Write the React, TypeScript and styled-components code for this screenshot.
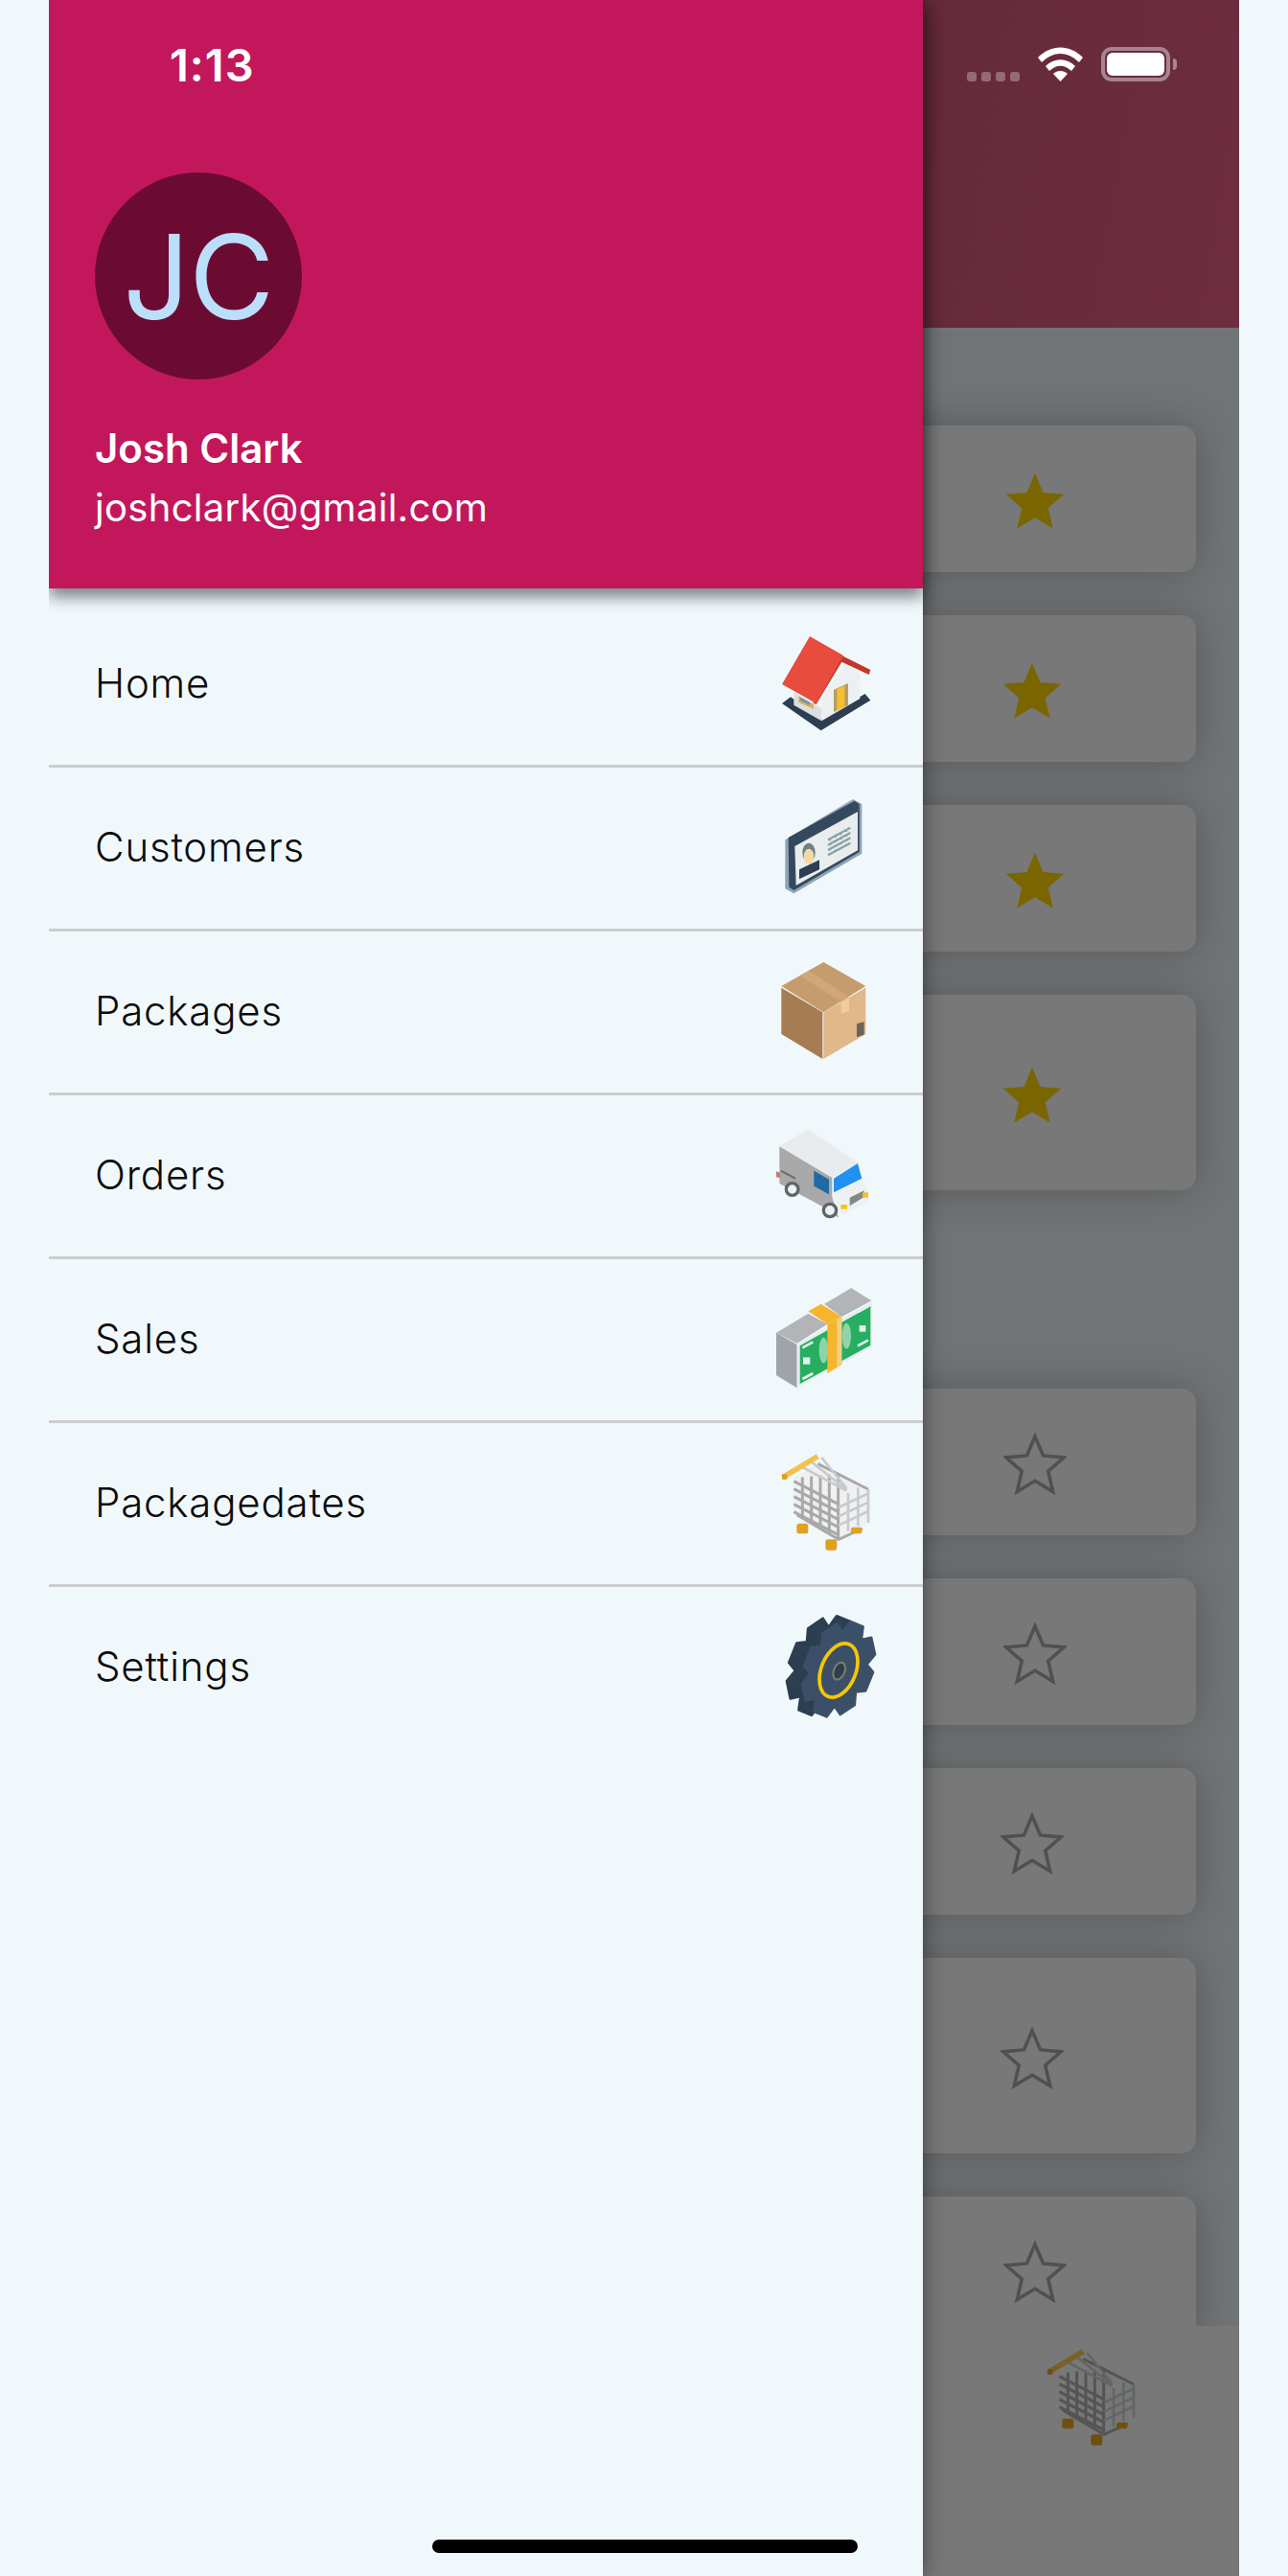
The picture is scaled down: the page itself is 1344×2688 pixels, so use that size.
import React from 'react';
import styled, { createGlobalStyle } from 'styled-components';

const GlobalStyle = createGlobalStyle`
  html, body { margin: 0; padding: 0; background: #f0f8fc; }
  body { font-family: Inter, "Noto Sans", sans-serif; }
`;

const Phone = styled.div`
  position: relative;
  display: flex;
  width: 1242px;
  height: 2688px;
  margin-left: 51px;
  overflow: hidden;
`;

const Drawer = styled.aside`
  position: relative;
  z-index: 2;
  flex: 0 0 912px;
  display: flex;
  flex-direction: column;
  background: #f0f8fc;
  box-shadow: 0 0 22px rgba(0, 0, 0, 0.45);
`;

const DrawerHeader = styled.header`
  box-sizing: border-box;
  height: 614px;
  padding: 47px 0 0 48px;
  background: #c2185b;
  color: #fff;
  box-shadow: 0 9px 15px rgba(0, 0, 0, 0.48);
`;

const Time = styled.div`
  margin-left: 78px;
  font-size: 47px;
  line-height: 42px;
  font-weight: 600;
  letter-spacing: 1px;
`;

const Avatar = styled.div`
  display: flex;
  align-items: center;
  justify-content: center;
  width: 216px;
  height: 216px;
  margin-top: 91px;
  border-radius: 50%;
  background: #6b0b32;
  color: #bbdefb;
  font-size: 122px;
  font-weight: 400;
  letter-spacing: -1px;
`;

const UserName = styled.div`
  margin-top: 47px;
  font-size: 42px;
  line-height: 50px;
  font-weight: 600;
`;

const UserMail = styled.div`
  margin-top: 12px;
  font-size: 40px;
  line-height: 50px;
  font-weight: 400;
  letter-spacing: 0.3px;
`;

const Menu = styled.nav`
  padding-top: 16px;
`;

const MenuRow = styled.div`
  box-sizing: border-box;
  display: flex;
  align-items: center;
  justify-content: space-between;
  height: 171px;
  padding: 0 41px 3px 48px;
  border-bottom: 3px solid #cccccc;
  &:last-child {
    border-bottom-color: transparent;
  }
`;

const MenuLabel = styled.span`
  font-size: 42px;
  font-weight: 300;
  letter-spacing: 0.8px;
  color: #0c0c0c;
`;

const IconSvg = styled.svg`
  display: block;
  width: 120px;
  height: 120px;
  flex: none;
  filter: blur(0.7px);
`;

const Behind = styled.main`
  position: relative;
  flex: 1;
  display: flex;
  flex-direction: column;
  min-width: 0;
`;

const Scrim = styled.div`
  position: absolute;
  inset: 0;
  z-index: 1;
  background: rgba(0, 0, 0, 0.5);
`;

const AppBar = styled.div`
  flex: 0 0 342px;
  background: linear-gradient(100deg, #ca5474, #dc5a80);
`;

const CardList = styled.div`
  flex: 1;
  min-height: 0;
  overflow: hidden;
  padding-top: 102px;
  background: #e2e8ec;
`;

const CardGroup = styled.div`
  display: flex;
  flex-direction: column;
  gap: 45px;
  & + & {
    margin-top: 207px;
  }
`;

const Card = styled.div<{ $tall?: boolean }>`
  box-sizing: border-box;
  display: flex;
  align-items: center;
  flex: none;
  height: ${p => (p.$tall ? 204 : 153)}px;
  width: 325px;
  margin-left: -40px;
  border-radius: 15px;
  background: #f0f0f0;
  box-shadow: 0 0 40px rgba(0, 0, 0, 0.24);
`;

const StarSvg = styled.svg<{ $nudge: number }>`
  display: block;
  width: 66px;
  height: 66px;
  margin-left: ${p => 124 + p.$nudge}px;
  margin-top: 5px;
`;

const BottomBar = styled.div`
  flex: 0 0 261px;
  box-sizing: border-box;
  position: relative;
  padding: 15px 0 0 116px;
  background: #f0f0f0;
`;

const StatusIcons = styled.div`
  position: absolute;
  z-index: 3;
  top: 49px;
  right: 72px;
  display: flex;
  align-items: flex-end;
  gap: 19px;
  height: 36px;
`;

const SignalDots = styled.div`
  display: flex;
  gap: 5px;
`;

const SignalDot = styled.i`
  width: 10px;
  height: 10px;
  border-radius: 3px;
  background: rgba(255, 255, 255, 0.3);
`;

const Battery = styled.div`
  position: relative;
  box-sizing: border-box;
  width: 72px;
  height: 36px;
  padding: 2px;
  border: 4px solid rgba(255, 255, 255, 0.42);
  border-radius: 11px;
  &::before {
    content: '';
    display: block;
    width: 100%;
    height: 100%;
    border-radius: 6px;
    background: #fff;
  }
  &::after {
    content: '';
    position: absolute;
    top: 8px;
    right: -11px;
    width: 4px;
    height: 12px;
    border-radius: 0 6px 6px 0;
    background: rgba(255, 255, 255, 0.42);
  }
`;

const HomeBar = styled.div`
  position: absolute;
  z-index: 4;
  left: 400px;
  bottom: 24px;
  width: 444px;
  height: 14px;
  border-radius: 7px;
  background: #000;
`;

const STAR_POINTS = '12,1.4 15.1,8.7 23,9.4 17,14.6 18.8,22.4 12,18.3 5.2,22.4 7,14.6 1,9.4 8.9,8.7';

const Star = ({ filled, nudge }: { filled?: boolean; nudge: number }) => (
  <StarSvg viewBox="0 0 24 24" $nudge={nudge}>
    {filled ? (
      <polygon points={STAR_POINTS} fill="#f4cc00" />
    ) : (
      <polygon points={STAR_POINTS} fill="none" stroke="#a0a0a0" strokeWidth="1.3" strokeLinejoin="miter" />
    )}
  </StarSvg>
);

const HomeIcon = () => (
  <IconSvg viewBox="66 42 360 360">
    <polygon points="108,285 135,265 230,335 368,255 385,275 230,370" fill="#2c3e50" />
    <polygon points="145,250 232,300 232,340 145,290" fill="#dcdfe0" />
    <polygon points="232,270 305,160 352,190 352,270 232,340" fill="#ecf0f1" />
    <polygon points="160,262 207,288 207,302 160,282" fill="#d9ae5a" />
    <polygon points="165,266 195,282 195,290 165,276" fill="#6f93b5" />
    <polygon points="270,242 315,222 315,290 270,312" fill="#b89d62" />
    <polygon points="280,240 304,230 304,296 280,308" fill="#f6bf2f" />
    <polygon points="295,135 385,180 380,195 295,155 215,288 205,283" fill="#c0392b" />
    <polygon points="195,75 300,135 215,285 108,225" fill="#e74c3c" />
  </IconSvg>
);

const CustomerIcon = () => (
  <IconSvg viewBox="66 555 360 360">
    <polygon points="118,712 330,585 358,600 358,755 145,880 118,865" fill="#8fa3b5" strokeLinejoin="round" />
    <polygon points="128,705 335,590 350,600 350,750 145,870 130,860" fill="#34495e" />
    <polygon points="148,732 345,624 345,745 152,855" fill="#e9edee" />
    <ellipse cx="192" cy="752" rx="20" ry="30" fill="#6e7f8c" />
    <ellipse cx="192" cy="764" rx="16" ry="24" fill="#f4d9a4" />
    <polygon points="162,805 225,775 225,805 162,835" fill="#2c3e50" />
    <g stroke="#88a3a5" strokeWidth="7" fill="none">
      <path d="M252 712 L322 674 M252 728 L322 690 M252 744 L322 706 M252 760 L322 722" />
      <path d="M258 708 V758 M275 698 V748 M292 690 V740 M309 680 V730" strokeDasharray="7 8" />
    </g>
  </IconSvg>
);

const PackageIcon = () => (
  <IconSvg viewBox="36 48 360 360">
    <polygon points="76,150 208,75 340,150 208,232" fill="#c59c6d" />
    <polygon points="76,155 205,232 205,378 76,300" fill="#a67c52" />
    <polygon points="208,232 340,155 340,300 208,378" fill="#e0b88a" />
    <polygon points="135,117 162,102 288,185 262,200" fill="#d2a679" />
    <polygon points="262,200 288,185 288,228 264,236" fill="#f0cb9d" />
    <polygon points="312,268 335,262 335,302 312,310" fill="#6d6354" />
  </IconSvg>
);

const TruckIcon = () => (
  <IconSvg viewBox="36 21 360 360">
    <polygon points="70,112 160,58 320,165 235,210" fill="#e9ecee" />
    <polygon points="70,112 235,210 235,270 255,335 205,300 70,228" fill="#a9a9a9" />
    <polygon points="178,188 225,215 225,262 178,236" fill="#1f6aa5" />
    <polygon points="240,212 315,165 328,212 240,256" fill="#2190f0" />
    <polygon points="235,262 330,215 350,250 350,285 265,328" fill="#eef1f2" />
    <polygon points="290,272 335,250 335,270 290,298" fill="#858888" />
    <rect x="330" y="256" width="18" height="16" fill="#f6c21c" />
    <rect x="262" y="294" width="20" height="14" fill="#f6c21c" />
    <polygon points="60,190 72,194 72,210 60,208" fill="#c87474" />
    <path d="M75 188 L120 212" stroke="#6d7174" strokeWidth="7" />
    <circle cx="110" cy="246" r="19" fill="#eef1f2" stroke="#5f6568" strokeWidth="10" />
    <circle cx="228" cy="312" r="20" fill="#eef1f2" stroke="#5f6568" strokeWidth="10" />
  </IconSvg>
);

const MoneyIcon = () => (
  <IconSvg viewBox="6 24 360 360">
    <polygon points="30,185 130,125 190,158 95,218" fill="#b2b4b7" />
    <polygon points="180,95 265,45 328,85 235,135" fill="#b2b4b7" />
    <polygon points="30,185 95,222 95,358 30,318" fill="#a0a4a8" />
    <polygon points="95,220 330,88 330,230 95,358" fill="#e8eeee" />
    <polygon points="104,226 325,102 325,224 104,345" fill="#27ae60" />
    <ellipse cx="178" cy="240" rx="14" ry="40" fill="#90d3ab" />
    <ellipse cx="250" cy="195" rx="14" ry="40" fill="#90d3ab" />
    <rect x="114" y="262" width="22" height="22" fill="#dff3e6" />
    <rect x="290" y="162" width="20" height="20" fill="#dff3e6" />
    <path d="M112 232 L145 214 M112 330 L145 312 M285 120 L318 102 M285 226 L318 208" stroke="#dff3e6" strokeWidth="8" />
    <polygon points="130,118 170,95 235,135 190,158" fill="#f5b62e" />
    <polygon points="190,158 235,135 235,285 190,312" fill="#f5b62e" />
    <polygon points="220,143 235,135 235,285 220,294" fill="#f1d083" />
  </IconSvg>
);

// wire basket: diagonals along the long side, uprights across it
const cartDiagonals = [0, 1, 2, 3, 4].map(k => `M85 ${140 + k * 24} L225 ${212 + k * 24}`).join(' ');
const cartUpper = [0, 1, 2].map(k => `M${112 + k * 30} ${96 - k * 15} L250 ${170 + k * -4}`).join(' ');
const cartUprights = [112, 140, 168, 196, 224].map(x => `M${x} ${Math.max(105, 130 - (x - 85) * 0.1)} V${240 + (x - 85) * 0.58}`).join(' ');

const CartIcon = () => (
  <IconSvg viewBox="6 27 360 360">
    <polygon points="85,130 160,85 318,165 318,270 225,322 85,240" fill="#eef0f1" />
    <g stroke="#a9a9a9" strokeWidth="9" fill="none">
      <path d={cartDiagonals} />
      <path d={cartUprights} />
      <path d="M160 85 L318 165" />
    </g>
    <g stroke="#c8cacc" strokeWidth="8" fill="none">
      <path d={cartUpper} />
      <path d="M225 222 L318 178 M225 250 L318 206 M225 278 L318 234" />
      <path d="M255 176 V296 M286 160 V280 M318 165 V270" />
    </g>
    <path d="M95 245 L225 322 L300 288" stroke="#a8a8a8" strokeWidth="9" fill="none" />
    <path d="M50 128 L160 62" stroke="#f5c04a" strokeWidth="17" />
    <rect x="48" y="118" width="16" height="16" fill="#dc9f22" />
    <rect x="94" y="272" width="36" height="32" rx="8" fill="#e0a020" />
    <rect x="184" y="322" width="36" height="34" rx="8" fill="#e0a020" />
    <rect x="264" y="284" width="34" height="20" rx="6" fill="#e0a020" />
  </IconSvg>
);

// cog outline, unit radius, squashed and turned in the gear's transform
const gearPoints = (rx: number, ry: number) => {
  const teeth = 8;
  const out: string[] = [];
  for (let i = 0; i < teeth; i++) {
    const a = (i / teeth) * Math.PI * 2;
    const step = (Math.PI * 2) / teeth;
    const radii: [number, number][] = [
      [0.78, -0.5],
      [1, -0.26],
      [1, 0.26],
      [0.78, 0.5],
    ];
    radii.forEach(([r, o]) => {
      const t = a + o * step;
      out.push(`${(Math.cos(t) * r * rx).toFixed(1)},${(Math.sin(t) * r * ry).toFixed(1)}`);
    });
  }
  return out.join(' ');
};

const GearIcon = () => (
  <IconSvg viewBox="-24 30 360 360">
    <polygon points={gearPoints(108, 162)} fill="#2c3e50" stroke="#2c3e50" strokeWidth="8" strokeLinejoin="round" transform="translate(150 207) rotate(22)" />
    <polygon points={gearPoints(106, 155)} fill="#3b5068" stroke="#3b5068" strokeWidth="8" strokeLinejoin="round" transform="translate(195 218) rotate(22)" />
    <ellipse cx="195" cy="222" rx="54" ry="88" fill="none" stroke="#f6c800" strokeWidth="11" transform="rotate(22 195 222)" />
    <ellipse cx="197" cy="224" rx="17" ry="28" fill="#2c3e50" stroke="#7f8060" strokeWidth="6" transform="rotate(22 197 224)" />
  </IconSvg>
);

const menuItems = [
  { label: 'Home', Icon: HomeIcon },
  { label: 'Customers', Icon: CustomerIcon },
  { label: 'Packages', Icon: PackageIcon },
  { label: 'Orders', Icon: TruckIcon },
  { label: 'Sales', Icon: MoneyIcon },
  { label: 'Packagedates', Icon: CartIcon },
  { label: 'Settings', Icon: GearIcon },
];

const favourites = [
  { nudge: 0 },
  { nudge: -3 },
  { nudge: 0 },
  { nudge: -3, tall: true },
];

const others = [
  { nudge: 0 },
  { nudge: 0 },
  { nudge: -3 },
  { nudge: -3, tall: true },
  { nudge: 0 },
];

export default function App(): JSX.Element {
  return (
    <Phone>
      <GlobalStyle />
      <Drawer>
        <DrawerHeader>
          <Time>1:13</Time>
          <Avatar>JC</Avatar>
          <UserName>Josh Clark</UserName>
          <UserMail>joshclark@gmail.com</UserMail>
        </DrawerHeader>
        <Menu>
          {menuItems.map(({ label, Icon }) => (
            <MenuRow key={label}>
              <MenuLabel>{label}</MenuLabel>
              <Icon />
            </MenuRow>
          ))}
        </Menu>
      </Drawer>
      <Behind>
        <AppBar />
        <CardList>
          <CardGroup>
            {favourites.map((c, i) => (
              <Card key={i} $tall={c.tall}>
                <Star filled nudge={c.nudge} />
              </Card>
            ))}
          </CardGroup>
          <CardGroup>
            {others.map((c, i) => (
              <Card key={i} $tall={c.tall}>
                <Star nudge={c.nudge} />
              </Card>
            ))}
          </CardGroup>
        </CardList>
        <BottomBar>
          <CartIcon />
        </BottomBar>
        <Scrim />
        <StatusIcons>
          <SignalDots>
            <SignalDot />
            <SignalDot />
            <SignalDot />
            <SignalDot />
          </SignalDots>
          <svg width="47" height="36" viewBox="0 0 47 36">
            <path d="M0 11 C14 -3 33 -3 47 11 L43 16 C30 4 17 4 4 16 Z" fill="#fff" />
            <path d="M8 20 C17 11 30 11 39 20 L35 25 C27 18 20 18 12 25 Z" fill="#fff" />
            <path d="M16 28 C20 24 27 24 31 28 L23.5 36 Z" fill="#fff" />
          </svg>
          <Battery />
        </StatusIcons>
      </Behind>
      <HomeBar />
    </Phone>
  );
}
